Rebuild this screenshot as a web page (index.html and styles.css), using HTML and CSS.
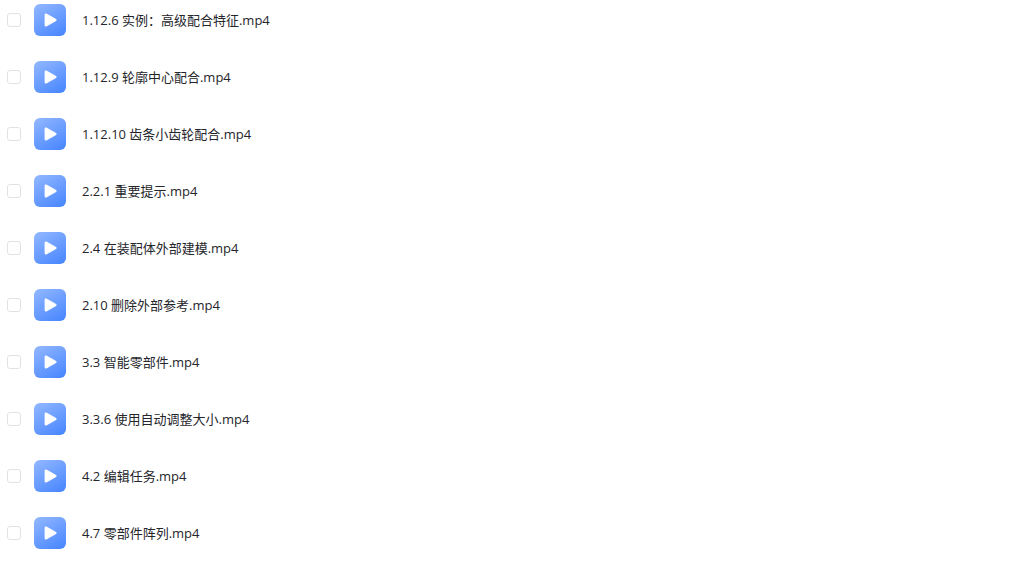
FILE: index.html
```html
<!DOCTYPE html>
<html lang="zh-CN">
<head>
  <meta charset="UTF-8">
  <meta name="viewport" content="width=device-width, initial-scale=1.0">
  <title>文件列表</title>
  <link rel="stylesheet" href="styles.css">
</head>

<body>

  <!-- 图标 -->
  <svg class="symbols" aria-hidden="true">
    <defs>
      <linearGradient id="videoBg" x1="0.2" y1="0" x2="0.8" y2="1">
        <stop offset="0" stop-color="#8db4ff" />
        <stop offset="1" stop-color="#4b88ff" />
      </linearGradient>
      <symbol id="video" viewBox="0 0 32 32">
        <rect width="32" height="32" rx="6" fill="url(#videoBg)" />
        <path d="M12.5 10 L21.8 15.2 Q23 16 21.8 16.8 L12.500 22 Q11 22.700 11 21.200 V10.800 Q11 9.300 12.500 10 Z" fill="#fff" stroke="#fff" stroke-width="0.8" stroke-linejoin="round" />
      </symbol>
    </defs>
  </svg>

  <!-- 文件列表 -->
  <ul class="file-list">
    <li class="file-item">
      <input type="checkbox" class="file-check" id="file1">
      <svg class="file-icon" aria-hidden="true"><use href="#video" /></svg>
      <label class="file-name" for="file1">1.12.6 实例：高级配合特征.mp4</label>
    </li>
    <li class="file-item">
      <input type="checkbox" class="file-check" id="file2">
      <svg class="file-icon" aria-hidden="true"><use href="#video" /></svg>
      <label class="file-name" for="file2">1.12.9 轮廓中心配合.mp4</label>
    </li>
    <li class="file-item">
      <input type="checkbox" class="file-check" id="file3">
      <svg class="file-icon" aria-hidden="true"><use href="#video" /></svg>
      <label class="file-name" for="file3">1.12.10 齿条小齿轮配合.mp4</label>
    </li>
    <li class="file-item">
      <input type="checkbox" class="file-check" id="file4">
      <svg class="file-icon" aria-hidden="true"><use href="#video" /></svg>
      <label class="file-name" for="file4">2.2.1 重要提示.mp4</label>
    </li>
    <li class="file-item">
      <input type="checkbox" class="file-check" id="file5">
      <svg class="file-icon" aria-hidden="true"><use href="#video" /></svg>
      <label class="file-name" for="file5">2.4 在装配体外部建模.mp4</label>
    </li>
    <li class="file-item">
      <input type="checkbox" class="file-check" id="file6">
      <svg class="file-icon" aria-hidden="true"><use href="#video" /></svg>
      <label class="file-name" for="file6">2.10 删除外部参考.mp4</label>
    </li>
    <li class="file-item">
      <input type="checkbox" class="file-check" id="file7">
      <svg class="file-icon" aria-hidden="true"><use href="#video" /></svg>
      <label class="file-name" for="file7">3.3 智能零部件.mp4</label>
    </li>
    <li class="file-item">
      <input type="checkbox" class="file-check" id="file8">
      <svg class="file-icon" aria-hidden="true"><use href="#video" /></svg>
      <label class="file-name" for="file8">3.3.6 使用自动调整大小.mp4</label>
    </li>
    <li class="file-item">
      <input type="checkbox" class="file-check" id="file9">
      <svg class="file-icon" aria-hidden="true"><use href="#video" /></svg>
      <label class="file-name" for="file9">4.2 编辑任务.mp4</label>
    </li>
    <li class="file-item">
      <input type="checkbox" class="file-check" id="file10">
      <svg class="file-icon" aria-hidden="true"><use href="#video" /></svg>
      <label class="file-name" for="file10">4.7 零部件阵列.mp4</label>
    </li>
  </ul>

</body>

</html>
```

FILE: styles.css
```css
body {
  font-family: "Open Sans", "Noto Sans CJK SC", sans-serif;
  font-size: 13px;
  line-height: 20px;
  margin: 0;
  color: #25262b;
  background-color: #fff;
}

.symbols {
  position: absolute;
  width: 0;
  height: 0;
}

/* File list */
.file-list {
  display: flex;
  flex-direction: column;
  gap: 25px;
  margin: 0;
  padding: 4px 7px;
  list-style: none;
}

.file-item {
  display: flex;
  align-items: center;
}

.file-check {
  appearance: none;
  box-sizing: border-box;
  flex: none;
  width: 14px;
  height: 14px;
  margin: 0 13px 0 0;
  border: 1px solid #e2e2e4;
  border-radius: 3px;
  background-color: #fff;
  cursor: pointer;
}

.file-check:checked {
  border-color: #4784fd;
  background-color: #4784fd;
}

.file-icon {
  flex: none;
  width: 32px;
  height: 32px;
  margin-right: 16px;
}

.file-name {
  cursor: pointer;
}
```
